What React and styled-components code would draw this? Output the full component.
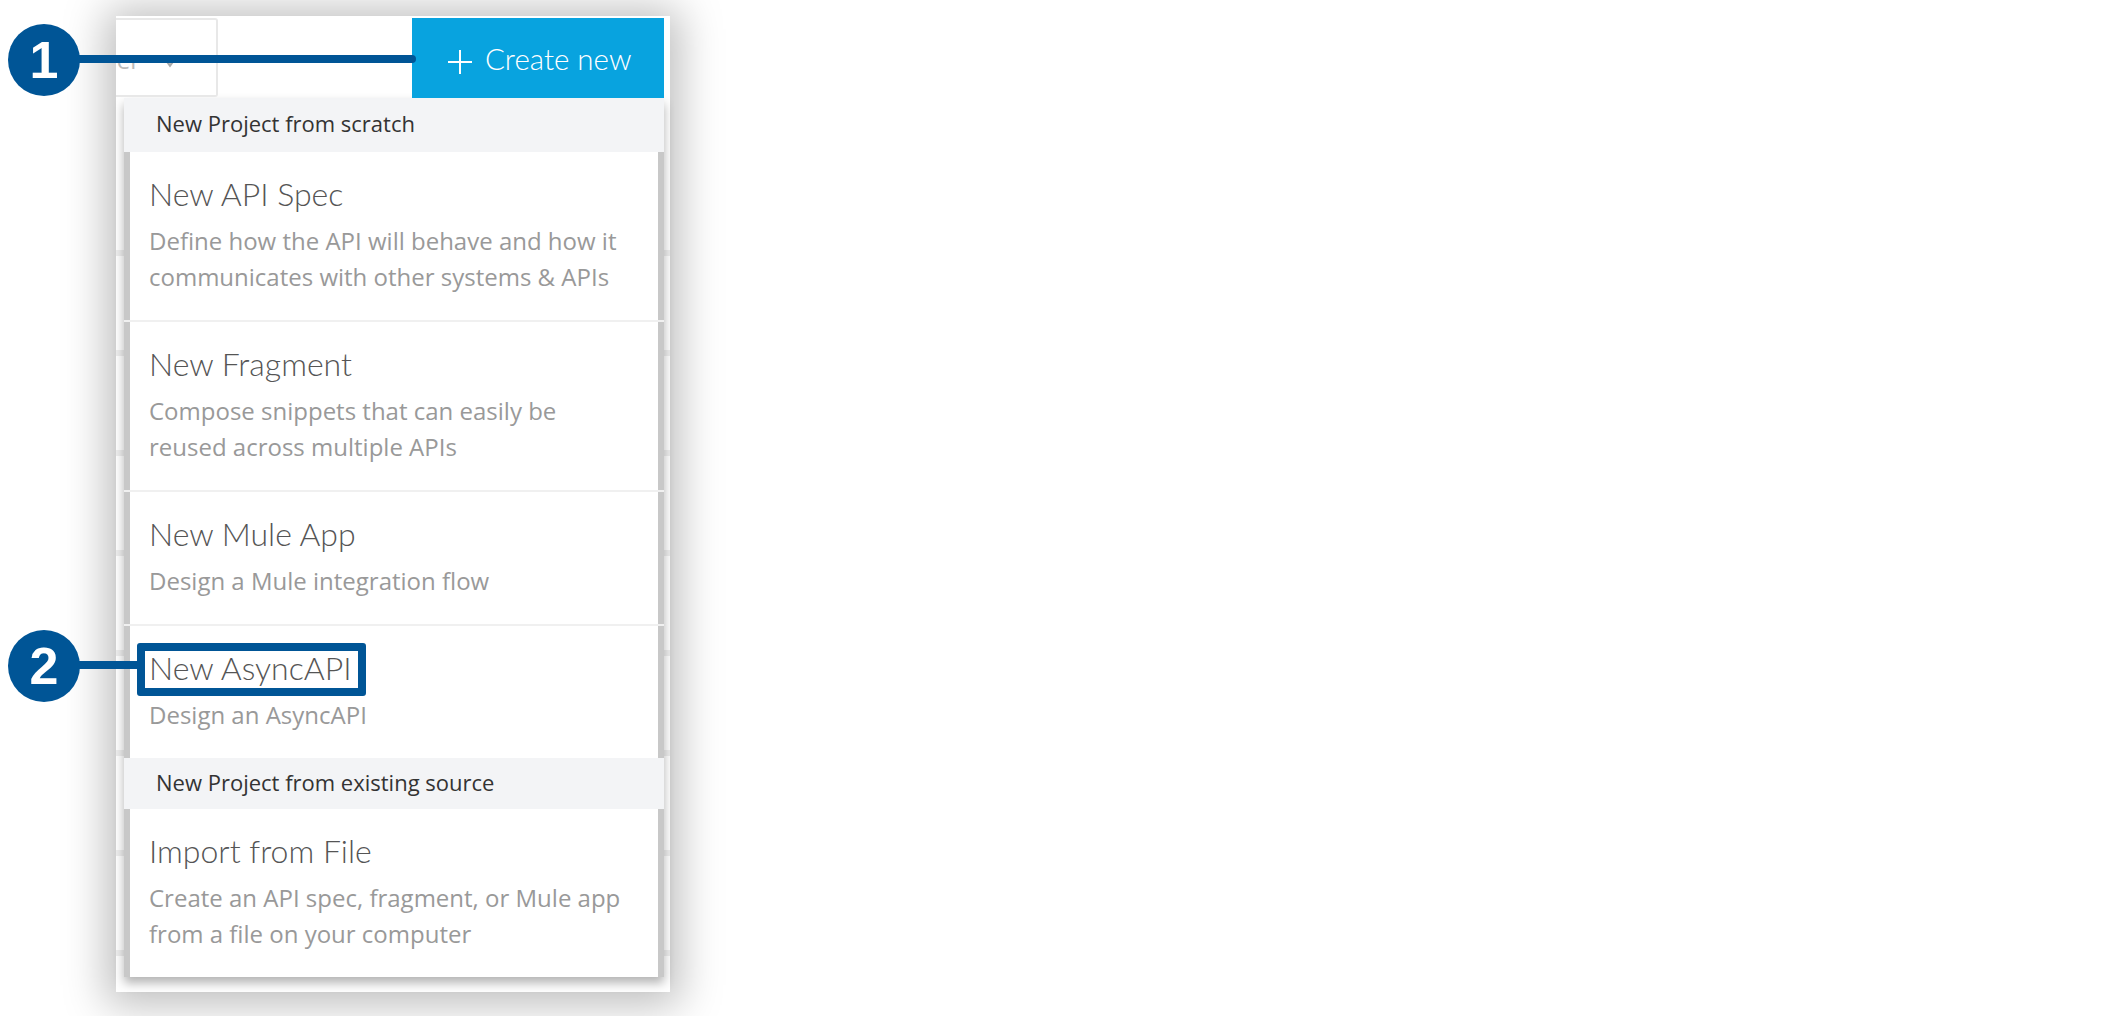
import React from "react";
import styled, { createGlobalStyle } from "styled-components";

const sections = [
  {
    heading: "New Project from scratch",
    headHeight: 54,
    items: [
      {
        title: "New API Spec",
        lines: [
          "Define how the API will behave and how it",
          "communicates with other systems & APIs",
        ],
      },
      {
        title: "New Fragment",
        lines: ["Compose snippets that can easily be", "reused across multiple APIs"],
      },
      { title: "New Mule App", lines: ["Design a Mule integration flow"] },
      { title: "New AsyncAPI", lines: ["Design an AsyncAPI"] },
    ],
  },
  {
    heading: "New Project from existing source",
    headHeight: 51,
    items: [
      {
        title: "Import from File",
        lines: ["Create an API spec, fragment, or Mule app", "from a file on your computer"],
      },
    ],
  },
];

const App = () => (
  <>
    <GlobalStyle />
    <Page>
      <Card>
        <Toolbar>
          <Select>
            <SelectText>Owner</SelectText>
            <Chevron width="16" height="16" viewBox="0 0 14 14" fill="none">
              <path d="M1 3l6 8 6-8" stroke="#aaa" strokeWidth="2" />
            </Chevron>
          </Select>
          <CreateButton>
            <PlusIcon width="24" height="24" viewBox="0 0 24 24">
              <path d="M12 0v24M0 12h24" stroke="#fff" strokeWidth="2" />
            </PlusIcon>
            Create new
          </CreateButton>
        </Toolbar>
        <Menu>
          {sections.map((section) => (
            <section key={section.heading}>
              <Heading $height={section.headHeight}>{section.heading}</Heading>
              {section.items.map((item) => (
                <Item key={item.title}>
                  <Title>{item.title}</Title>
                  <Description>
                    {item.lines.map((line) => (
                      <span key={line}>{line}</span>
                    ))}
                  </Description>
                </Item>
              ))}
            </section>
          ))}
        </Menu>
      </Card>
      <Badge $top={24}>1</Badge>
      <Connector $top={55} $width={338} $round />
      <Badge $top={630}>2</Badge>
      <Connector $top={661} $width={60} />
      <Highlight />
    </Page>
  </>
);

const GlobalStyle = createGlobalStyle`
  html, body {
    margin: 0;
    background: #fff;
  }
`;

const Page = styled.div`
  position: relative;
  box-sizing: border-box;
  width: 2120px;
  height: 1016px;
  padding: 16px 0 0 116px;
  overflow: hidden;
  background: #fff;
`;

const Card = styled.div`
  box-sizing: border-box;
  width: 554px;
  height: 976px;
  padding: 2px 6px 0 0;
  background: repeating-linear-gradient(to bottom, #eeeeee 0 6px, transparent 6px 100px) 0 234px / 100% 100%
      no-repeat,
    #fff;
  box-shadow: 0 3px 40px 10px rgba(0, 0, 0, 0.26);
`;

const Toolbar = styled.div`
  display: flex;
  justify-content: space-between;
  height: 80px;
`;

const Select = styled.div`
  box-sizing: border-box;
  display: flex;
  align-items: center;
  justify-content: flex-end;
  gap: 22px;
  width: 102px;
  height: 79px;
  padding: 4px 38px 0 0;
  overflow: hidden;
  background: #fff;
  border: 2px solid #e8e8e8;
  border-left: 0;
  border-radius: 0 3px 3px 0;
`;

const SelectText = styled.span`
  flex-shrink: 0;
  font: 24px "Open Sans", sans-serif;
  color: #bbb;
`;

const Chevron = styled.svg`
  flex-shrink: 0;
  margin-top: 2px;
`;

const CreateButton = styled.div`
  box-sizing: border-box;
  display: flex;
  align-items: center;
  gap: 13px;
  width: 252px;
  padding: 0 0 0 36px;
  background: #08a3df;
  font: 300 29.5px Lato, sans-serif;
  color: #fff;
`;

const PlusIcon = styled.svg`
  flex-shrink: 0;
  margin-top: 8px;
`;

const Menu = styled.div`
  width: 540px;
  margin-left: 8px;
  box-shadow: 0 6px 10px rgba(0, 0, 0, 0.3);
`;

const Heading = styled.div`
  box-sizing: border-box;
  display: flex;
  align-items: center;
  height: ${(p) => p.$height}px;
  padding: 0 0 4px 32px;
  background: #f3f4f6;
  font: 22px "Open Sans", sans-serif;
  color: #333;
`;

const Item = styled.div`
  box-sizing: border-box;
  padding: 20px 0 25px 19px;
  background: #fff;
  border-left: 6px solid #c8c8c8;
  border-right: 6px solid #c8c8c8;

  & + & {
    box-shadow: 0 -2px 0 #f0f0f0;
    margin-top: 2px;
  }
`;

const Title = styled.div`
  height: 44px;
  font: 300 32px / 44px Lato, sans-serif;
  color: #555;
`;

const Description = styled.div`
  display: flex;
  flex-direction: column;
  margin-top: 7px;
  font: 24px / 36px "Open Sans", sans-serif;
  color: #999;
`;

const Badge = styled.div`
  position: absolute;
  top: ${(p) => p.$top}px;
  left: 8px;
  display: flex;
  align-items: center;
  justify-content: center;
  width: 72px;
  height: 72px;
  border-radius: 50%;
  background: #005596;
  font: bold 52px "Liberation Sans", sans-serif;
  color: #fff;
`;

const Connector = styled.div`
  position: absolute;
  top: ${(p) => p.$top}px;
  left: 78px;
  width: ${(p) => p.$width}px;
  height: 8px;
  background: #005596;
  border-radius: ${(p) => (p.$round ? "0 4px 4px 0" : "0")};
`;

const Highlight = styled.div`
  position: absolute;
  top: 643px;
  left: 137px;
  box-sizing: border-box;
  width: 229px;
  height: 53px;
  border: 8px solid #005596;
  border-radius: 3px;
`;

export default App;
